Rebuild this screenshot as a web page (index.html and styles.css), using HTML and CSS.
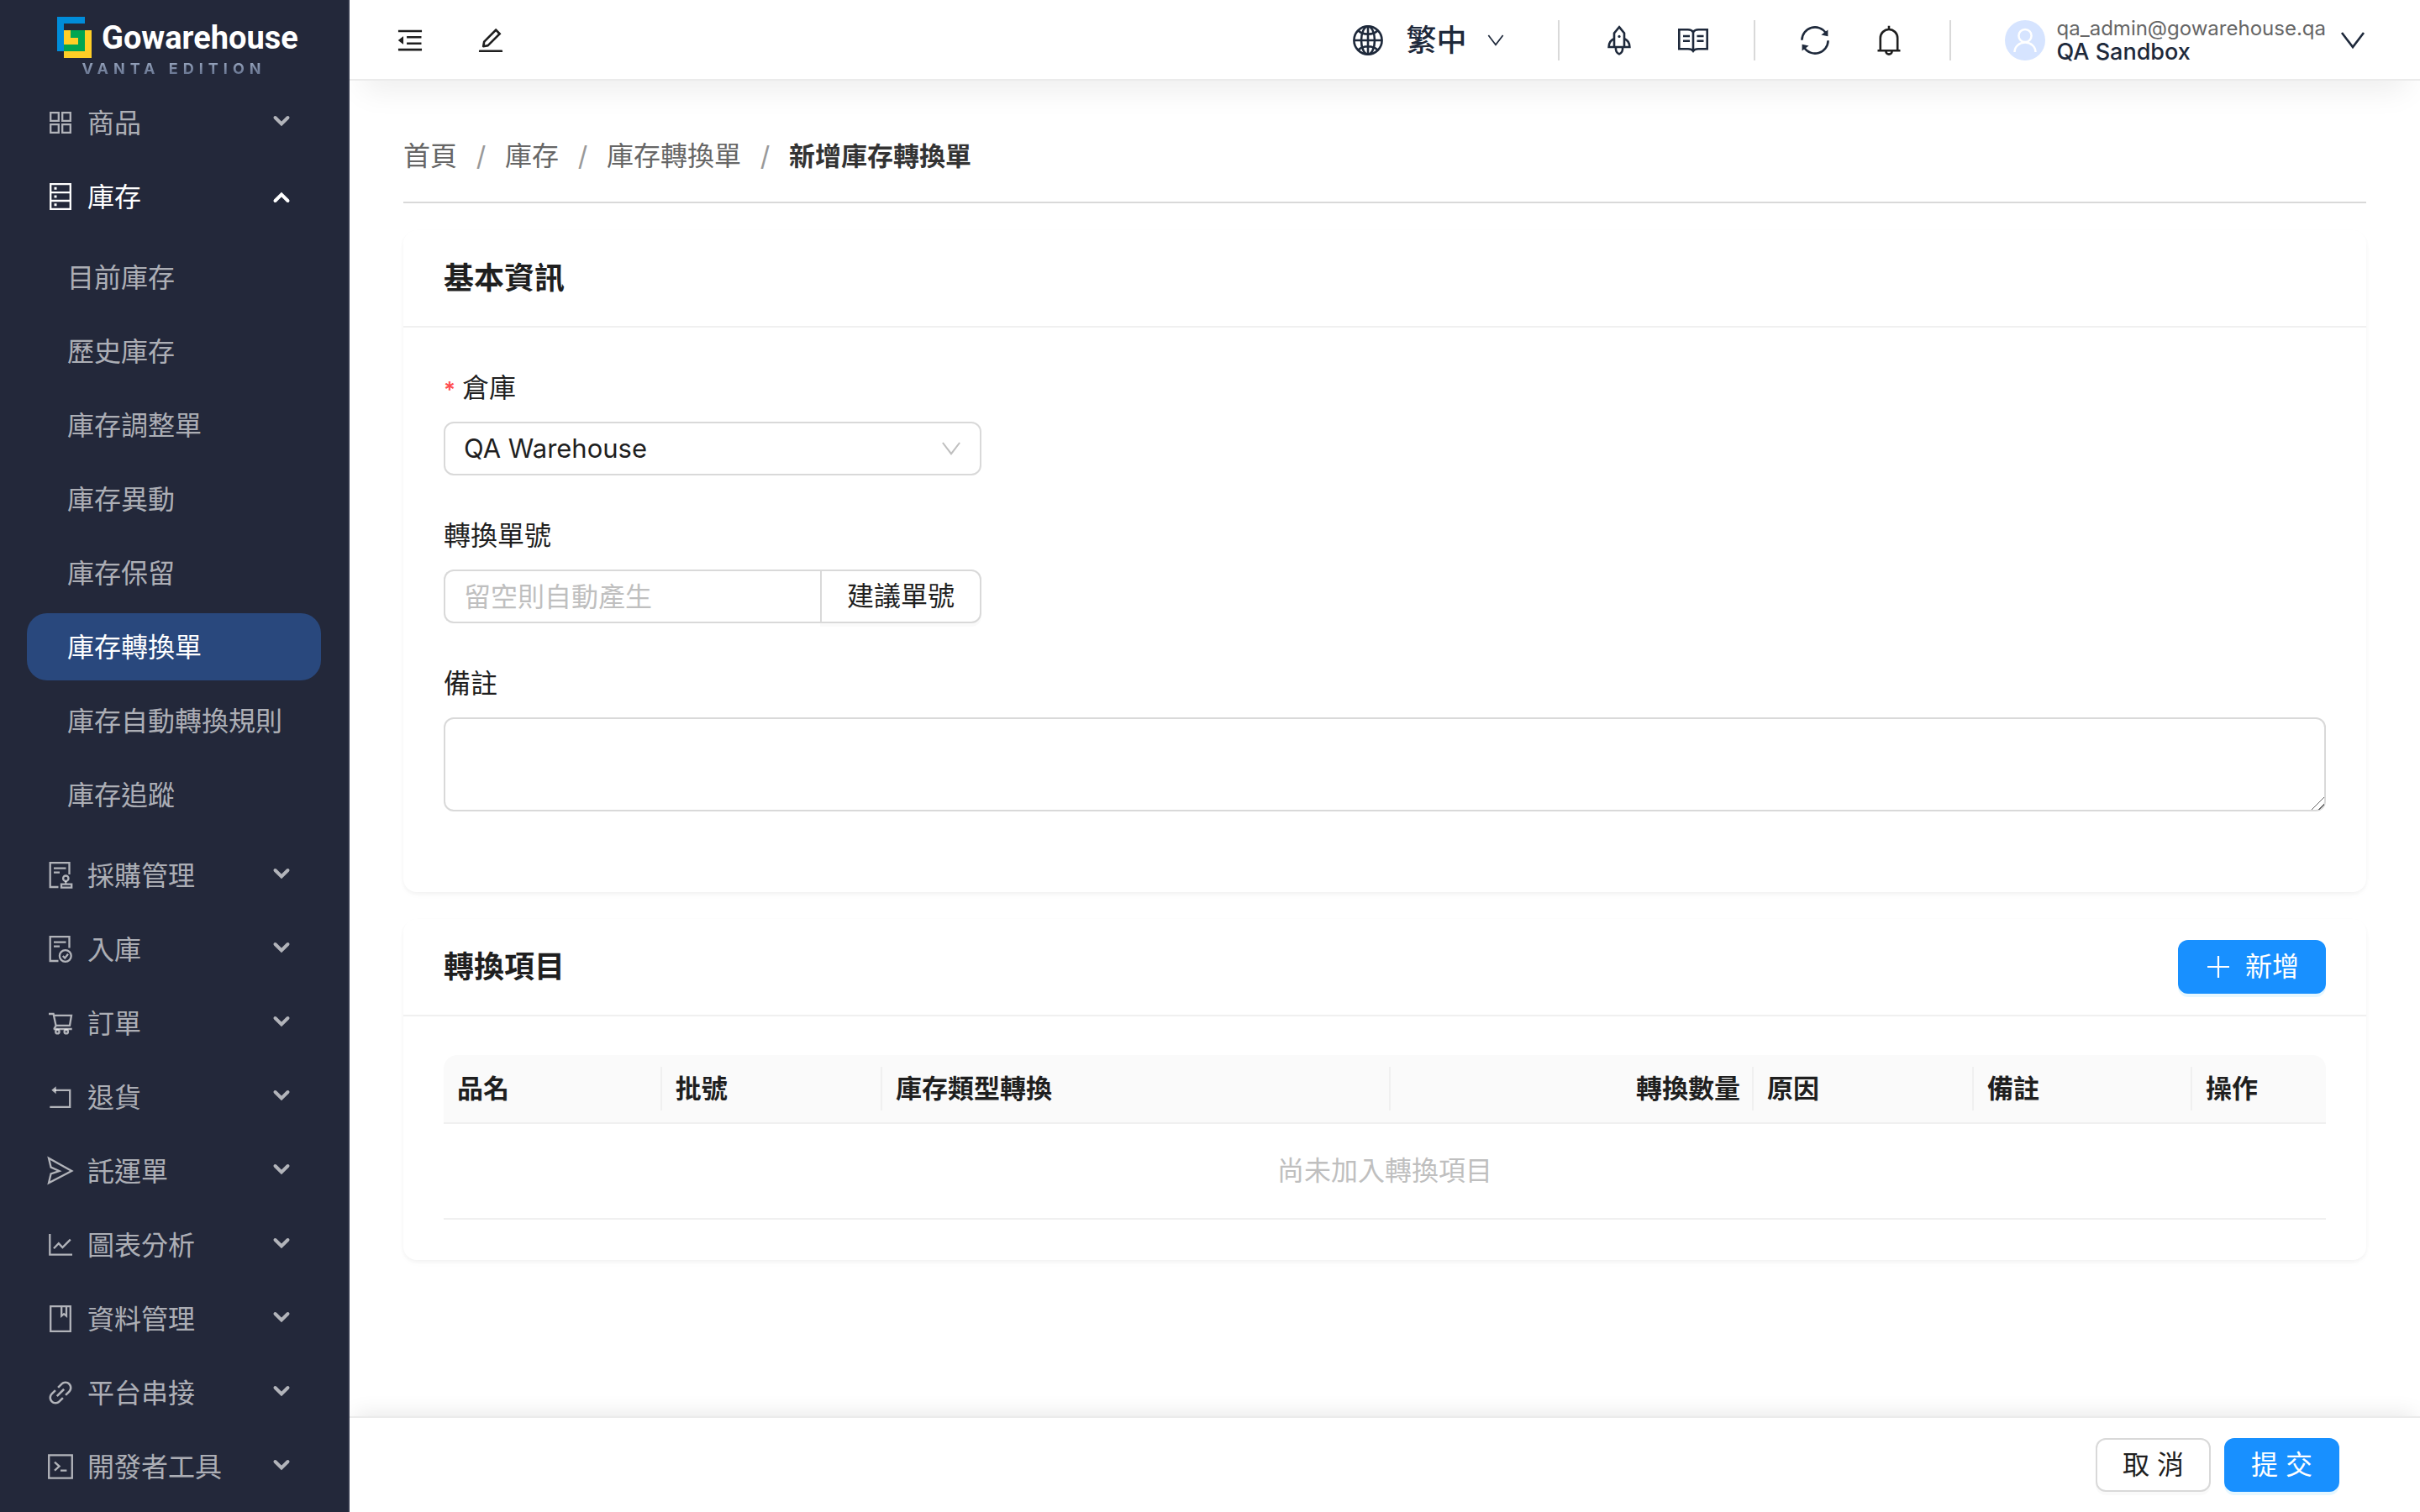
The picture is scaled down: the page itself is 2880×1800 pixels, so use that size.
FILE: index.html
```html
<!DOCTYPE html>
<html lang="zh-Hant">
<head>
  <meta charset="UTF-8">
  <meta name="viewport" content="width=device-width, initial-scale=1.0">
  <title>新增庫存轉換單</title>
  <link rel="stylesheet" href="styles.css">
</head>
<body>

  <!-- shared icons -->
  <svg class="sprite" aria-hidden="true">
    <symbol id="caret-down" viewBox="0 0 24 24">
      <path d="M4.5 6L12 13.5L19.5 6" fill="none" stroke="currentColor" stroke-width="4" stroke-linecap="round"/>
    </symbol>
    <symbol id="caret-up" viewBox="0 0 24 24">
      <path d="M4.5 17L12 9.5L19.5 17" fill="none" stroke="currentColor" stroke-width="4" stroke-linecap="round"/>
    </symbol>
    <symbol id="arrow-down" viewBox="0 0 36 36">
      <path d="M5 9L18 26L31 9" fill="none" stroke="currentColor" stroke-width="2.6"/>
    </symbol>
  </svg>

  <div class="layout">
    <aside class="sidebar">
      <div class="logo">
        <div class="logo-row">
          <svg class="logo-mark" viewBox="0 0 41 50">
            <path d="M0 0h33v8H8v33H0z" fill="#008cd9"/>
            <path d="M8 16h33v33H8z" fill="#ffcf26"/>
            <path d="M16 16h17v25H8v-8h17v-8h-9z" fill="#00a651"/>
          </svg>
          <span class="logo-name">Gowarehouse</span>
        </div>
        <div class="logo-edition">VANTA EDITION</div>
      </div>

      <nav class="menu">
        <button type="button" class="menu-title">
          <svg class="icon" viewBox="0 0 36 36"><path d="M6.2 6.2h9.6v9.6H6.2zM20.2 6.2h9.6v9.6h-9.6zM6.2 20.2h9.6v9.6H6.2zM20.2 20.2h9.6v9.6h-9.6z"/></svg>
          <span>商品</span>
          <svg class="caret"><use href="#caret-down"/></svg>
        </button>
        <button type="button" class="menu-title open">
          <svg class="icon" viewBox="0 0 36 36"><path d="M6.2 3.2h23.6v29.6H6.2zM6.2 13.2h23.6M6.2 23h23.6"/><path class="solid" d="M10.5 6.8h3v3h-3zM10.5 16.6h3v3h-3zM10.5 26.2h3v3h-3z"/></svg>
          <span>庫存</span>
          <svg class="caret"><use href="#caret-up"/></svg>
        </button>
        <div class="submenu">
          <a href="#">目前庫存</a>
          <a href="#">歷史庫存</a>
          <a href="#">庫存調整單</a>
          <a href="#">庫存異動</a>
          <a href="#">庫存保留</a>
          <a href="#" class="active">庫存轉換單</a>
          <a href="#">庫存自動轉換規則</a>
          <a href="#">庫存追蹤</a>
        </div>
        <button type="button" class="menu-title">
          <svg class="icon" viewBox="0 0 36 36"><path d="M15.5 32H5.7V3.2h22.8V17M10 9.7h14.5M10 14.7h7"/><circle cx="24.3" cy="21.7" r="3.2"/><path d="M24.3 25v3M19 28.7h12.2v4H19z"/></svg>
          <span>採購管理</span>
          <svg class="caret"><use href="#caret-down"/></svg>
        </button>
        <button type="button" class="menu-title">
          <svg class="icon" viewBox="0 0 36 36"><path d="M15.5 32H5.7V3.2h22.8V16.5M10 9.7h14.5M10 14.7h7"/><circle cx="23.8" cy="26" r="6.9"/><path d="M20.8 26l2.4 2.6 3.8-4.8"/></svg>
          <span>入庫</span>
          <svg class="caret"><use href="#caret-down"/></svg>
        </button>
        <button type="button" class="menu-title">
          <svg class="icon" viewBox="0 0 36 36"><path d="M4 7h5.6l3 14.2-2.4 4M10 8.8h21L29 20.8H12.4M9.7 25h22"/><circle cx="14.4" cy="28.2" r="2.2"/><circle cx="24.8" cy="28.2" r="2.2"/></svg>
          <span>訂單</span>
          <svg class="caret"><use href="#caret-down"/></svg>
        </button>
        <button type="button" class="menu-title">
          <svg class="icon" viewBox="0 0 36 36"><path d="M11 9.8h18.2v20H5.3"/><path class="solid" d="M7.3 9.8l5.4-4.5v9z"/></svg>
          <span>退貨</span>
          <svg class="caret"><use href="#caret-down"/></svg>
        </button>
        <button type="button" class="menu-title">
          <svg class="icon" viewBox="0 0 36 36"><path d="M4 2.8L31.3 18L4 32.2L6.6 21.4L16.5 18L6.6 13.6z"/></svg>
          <span>託運單</span>
          <svg class="caret"><use href="#caret-down"/></svg>
        </button>
        <button type="button" class="menu-title">
          <svg class="icon" viewBox="0 0 36 36"><path d="M5.3 5v24.6H32M10 22.2l5.8-6 4.6 4.8 9.4-9.4"/></svg>
          <span>圖表分析</span>
          <svg class="caret"><use href="#caret-down"/></svg>
        </button>
        <button type="button" class="menu-title">
          <svg class="icon" viewBox="0 0 36 36"><path d="M6.2 3.2h23.6v29.6H6.2zM19.2 3v11.6l2.9-2.4 2.9 2.4V3"/></svg>
          <span>資料管理</span>
          <svg class="caret"><use href="#caret-down"/></svg>
        </button>
        <button type="button" class="menu-title">
          <svg class="icon" viewBox="0 0 1024 1024"><path class="solid" d="M574 665.4a8.03 8.03 0 00-11.3 0L446.5 781.6c-53.8 53.8-144.6 59.5-204 0-59.5-59.5-53.8-150.2 0-204l116.2-116.2c3.1-3.1 3.1-8.2 0-11.3l-39.8-39.8a8.03 8.03 0 00-11.3 0L191.4 526.5c-84.6 84.6-84.6 221.5 0 306s221.5 84.6 306 0l116.2-116.2c3.1-3.1 3.1-8.2 0-11.3L574 665.4zm258.6-474c-84.6-84.6-221.5-84.6-306 0L410.3 307.6a8.03 8.03 0 000 11.3l39.7 39.7c3.1 3.1 8.2 3.1 11.3 0l116.2-116.2c53.8-53.8 144.6-59.5 204 0 59.5 59.5 53.8 150.2 0 204L665.3 562.6a8.03 8.03 0 000 11.3l39.8 39.8c3.1 3.1 8.2 3.1 11.3 0l116.2-116.2c84.5-84.6 84.5-221.5 0-306.1zM610.1 372.3a8.03 8.03 0 00-11.3 0L372.3 598.7a8.03 8.03 0 000 11.3l39.6 39.6c3.1 3.1 8.2 3.1 11.3 0l226.4-226.4c3.1-3.1 3.1-8.2 0-11.3l-39.5-39.6z"/></svg>
          <span>平台串接</span>
          <svg class="caret"><use href="#caret-down"/></svg>
        </button>
        <button type="button" class="menu-title">
          <svg class="icon" viewBox="0 0 36 36"><path d="M4.2 4.4h27.6v27.2H4.2zM11 12.6l5.6 5-5.6 5M18 22.6h7.4"/></svg>
          <span>開發者工具</span>
          <svg class="caret"><use href="#caret-down"/></svg>
        </button>
      </nav>
    </aside>

    <div class="page">
      <header class="topbar">
        <div class="topbar-left">
          <button type="button" class="icon-btn" aria-label="收合選單">
            <svg viewBox="0 0 1024 1024"><path fill="currentColor" d="M408 442h480c4.4 0 8-3.6 8-8v-56c0-4.4-3.6-8-8-8H408c-4.4 0-8 3.6-8 8v56c0 4.4 3.6 8 8 8zm-8 204c0 4.4 3.6 8 8 8h480c4.4 0 8-3.6 8-8v-56c0-4.4-3.6-8-8-8H408c-4.4 0-8 3.6-8 8v56zm504-486H120c-4.4 0-8 3.6-8 8v56c0 4.4 3.6 8 8 8h784c4.4 0 8-3.6 8-8v-56c0-4.4-3.6-8-8-8zm0 632H120c-4.4 0-8 3.6-8 8v56c0 4.4 3.6 8 8 8h784c4.4 0 8-3.6 8-8v-56c0-4.4-3.6-8-8-8zM115.4 518.9L271.7 642c5.8 4.6 14.4.5 14.4-6.9V388.9c0-7.4-8.5-11.5-14.4-6.9L115.4 505.1a8.74 8.74 0 000 13.8z"/></svg>
          </button>
          <button type="button" class="icon-btn" aria-label="編輯">
            <svg viewBox="0 0 1024 1024"><path fill="currentColor" d="M257.7 752c2 0 4-.2 6-.5L431.9 722c2-.4 3.9-1.3 5.3-2.8l423.9-423.9a9.96 9.96 0 000-14.1L694.9 114.9c-1.9-1.9-4.4-2.9-7.1-2.9s-5.2 1-7.1 2.9L256.8 538.8c-1.5 1.5-2.4 3.3-2.8 5.3l-29.5 168.2a33.5 33.5 0 009.4 29.8c6.6 6.4 14.9 9.9 23.8 9.9zm67.4-174.4L687.8 215l73.3 73.3-362.7 362.6-88.9 15.7 15.6-89zM880 836H144c-17.7 0-32 14.3-32 32v36c0 4.4 3.6 8 8 8h784c4.4 0 8-3.6 8-8v-36c0-17.7-14.3-32-32-32z"/></svg>
          </button>
        </div>

        <div class="topbar-right">
          <button type="button" class="lang">
            <svg class="line-icon" viewBox="0 0 36 36"><circle cx="18" cy="18" r="16.6"/><ellipse cx="18" cy="18" rx="8" ry="16.6"/><path d="M18 1.4v33.2M1.4 18h33.2M6.5 6.5c6 5.6 17 5.6 23 0M6.5 29.5c6-5.6 17-5.6 23 0"/></svg>
            <span>繁中</span>
            <svg class="lang-arrow"><use href="#arrow-down"/></svg>
          </button>
          <div class="tools">
            <button type="button" class="icon-btn navy" aria-label="快速開始">
              <svg class="line-icon" viewBox="0 0 36 36"><path d="M18 2.2L24 9.5V26H12V9.5zM12 16c-4.5 2-6.4 5-6.4 10H12M24 16c4.5 2 6.4 5 6.4 10H24M14 26c-.5 4 1 7 4 8.4 3-1.4 4.5-4.4 4-8.4"/><circle class="solid" cx="18" cy="13.4" r="1.6"/></svg>
            </button>
            <button type="button" class="icon-btn navy" aria-label="說明文件">
              <svg class="line-icon" viewBox="0 0 36 36"><path d="M1.3 5.3h10.5c3 0 5 1 6.2 3 1.2-2 3.2-3 6.2-3h10.5v23H24c-3 0-4.8.6-6 2.4-1.2-1.8-3-2.4-6-2.4H1.3zM18 8v22M6 13h8M6 18.7h8M22.5 13h8M22.5 18.7h8"/></svg>
            </button>
          </div>
          <div class="tools">
            <button type="button" class="icon-btn navy" aria-label="重新整理">
              <svg class="line-icon" viewBox="0 0 36 36"><path d="M2.4 17.8A15.6 15.6 0 0 1 31 9.4M33.6 18.2A15.6 15.6 0 0 1 5 26.6"/><path class="solid" d="M33.4 5.6v7.6l-8-1.6zM2.6 30.4v-7.6l8 1.6z"/></svg>
            </button>
            <button type="button" class="icon-btn" aria-label="通知">
              <svg class="line-icon" viewBox="0 0 36 36"><path d="M18 .8v4M7.8 30V15.2a10.2 10.2 0 0 1 20.4 0V30M4.5 30.2h27M14.4 31a3.6 3.6 0 0 0 7.2 0"/></svg>
            </button>
          </div>
          <button type="button" class="user">
            <svg class="avatar" viewBox="0 0 48 48"><circle cx="24" cy="24" r="24" fill="#d6e4ff"/><g fill="none" stroke="#fff" stroke-width="2.5"><circle cx="24" cy="18.5" r="7.6"/><path d="M11.5 38a12.5 11.5 0 0 1 25 0"/></g></svg>
            <span class="user-text">
              <span class="user-mail">qa_admin@gowarehouse.qa</span>
              <span class="user-org">QA Sandbox</span>
            </span>
            <svg class="user-arrow"><use href="#arrow-down"/></svg>
          </button>
        </div>
      </header>

      <main class="content">
        <nav class="breadcrumb" aria-label="breadcrumb">
          <a href="#">首頁</a>
          <span class="sep">/</span>
          <a href="#">庫存</a>
          <span class="sep">/</span>
          <a href="#">庫存轉換單</a>
          <span class="sep">/</span>
          <span class="current">新增庫存轉換單</span>
        </nav>

        <section class="card">
          <div class="card-head">
            <h2>基本資訊</h2>
          </div>
          <form class="card-body">
            <div class="field">
              <label for="warehouse"><span class="required">*</span>倉庫</label>
              <div class="select-wrap">
                <select id="warehouse">
                  <option>QA Warehouse</option>
                </select>
                <svg class="select-arrow"><use href="#arrow-down"/></svg>
              </div>
            </div>
            <div class="field">
              <label for="orderNo">轉換單號</label>
              <div class="input-group">
                <input type="text" id="orderNo" placeholder="留空則自動產生">
                <button type="button" class="btn">建議單號</button>
              </div>
            </div>
            <div class="field">
              <label for="remark">備註</label>
              <textarea id="remark"></textarea>
            </div>
          </form>
        </section>

        <section class="card">
          <div class="card-head">
            <h2>轉換項目</h2>
            <button type="button" class="btn btn-primary">
              <svg class="plus" viewBox="0 0 32 32"><path d="M16 3v26M3 16h26" stroke="currentColor" stroke-width="2.2"/></svg>
              新增
            </button>
          </div>
          <div class="card-body card-body-table">
            <table>
              <colgroup>
                <col class="col-name">
                <col class="col-lot">
                <col class="col-type">
                <col class="col-qty">
                <col class="col-reason">
                <col class="col-note">
                <col class="col-action">
              </colgroup>
              <thead>
                <tr>
                  <th>品名</th>
                  <th>批號</th>
                  <th>庫存類型轉換</th>
                  <th class="num">轉換數量</th>
                  <th>原因</th>
                  <th>備註</th>
                  <th>操作</th>
                </tr>
              </thead>
              <tbody>
                <tr>
                  <td class="empty" colspan="7">尚未加入轉換項目</td>
                </tr>
              </tbody>
            </table>
          </div>
        </section>
      </main>

      <footer class="actions">
        <button type="button" class="btn">取 消</button>
        <button type="submit" class="btn btn-primary">提 交</button>
      </footer>
    </div>
  </div>

</body>
</html>
```
FILE: styles.css
```css
* {
  box-sizing: border-box;
}

body {
  margin: 0;
  background: #fff;
  color: #1f1f1f;
  font-family: Inter, "Noto Sans CJK TC", sans-serif;
  font-size: 32px;
  line-height: 48px;
}

button,
input,
select,
textarea {
  font: inherit;
  color: inherit;
}

button {
  border: none;
  background: none;
  padding: 0;
  cursor: pointer;
}

a {
  color: inherit;
  text-decoration: none;
}

.sprite {
  display: none;
}

.layout {
  display: grid;
  grid-template-columns: 416px 1fr;
  height: 100vh;
}

/* sidebar */
.sidebar {
  position: relative;
  z-index: 3;
  background: #23283a;
  border-right: 2px solid #32374a;
  padding: 20px 32px 0;
  overflow: hidden;
  color: rgba(255, 255, 255, 0.65);
}

.logo {
  height: 86px;
}

.logo-row {
  display: flex;
  align-items: center;
  height: 50px;
  padding-left: 36px;
  gap: 12px;
}

.logo-mark {
  width: 41px;
  height: 50px;
  flex: none;
}

.logo-name {
  color: #fff;
  font-family: Roboto, "Liberation Sans", sans-serif;
  font-size: 38px;
  font-weight: bold;
  white-space: nowrap;
}

.logo-edition {
  text-align: center;
  font-size: 18px;
  font-weight: 700;
  line-height: 24px;
  letter-spacing: 6px;
  background: linear-gradient(#a3b1c9, #566380);
  -webkit-background-clip: text;
  background-clip: text;
  color: transparent;
}

.menu,
.submenu {
  display: flex;
  flex-direction: column;
  gap: 8px;
}

.menu-title {
  display: flex;
  align-items: center;
  gap: 14px;
  height: 80px;
  padding: 0 35px 0 22px;
  text-align: left;
}

.menu-title.open {
  color: #fff;
}

.menu-title span {
  flex: 1;
  padding-top: 2px;
}

.icon {
  width: 36px;
  height: 36px;
  fill: none;
  stroke: currentColor;
  stroke-width: 2.3;
}

.caret {
  width: 24px;
  height: 24px;
}

.submenu {
  padding: 8px 0;
}

.submenu a {
  height: 80px;
  padding-left: 48px;
  border-radius: 24px;
  line-height: 82px;
}

.submenu .active {
  background: #29487d;
  color: #fff;
}

.solid {
  fill: currentColor;
  stroke: none;
}

/* top bar */
.page {
  display: flex;
  flex-direction: column;
  min-width: 0;
  height: 100vh;
}

.topbar {
  position: relative;
  z-index: 2;
  flex: none;
  display: flex;
  align-items: center;
  justify-content: space-between;
  height: 96px;
  padding: 2px 62px 0 54px;
  background: #fff;
  border-bottom: 2px solid #ebebeb;
  box-shadow: 0 28px 36px -16px rgba(0, 0, 0, 0.07);
}

.topbar-left {
  display: flex;
  gap: 60px;
}

.topbar-right {
  display: flex;
  align-items: center;
  color: #1e293b;
}

.icon-btn {
  width: 36px;
  height: 36px;
  color: #1f1f1f;
}

.icon-btn svg {
  display: block;
  width: 36px;
  height: 36px;
}

.navy {
  color: #1e293b;
}

.line-icon {
  width: 36px;
  height: 36px;
  fill: none;
  stroke: currentColor;
  stroke-width: 2.6;
}

.lang {
  display: flex;
  align-items: center;
  margin-right: 62px;
  font-size: 36px;
  font-weight: 500;
}

.lang span {
  margin: 0 22px 0 28px;
}

.lang-arrow {
  width: 24px;
  height: 24px;
}

.tools {
  display: flex;
  align-items: center;
  gap: 52px;
  height: 48px;
  padding: 0 54px 0 53px;
  border-left: 2px solid #d9d9d9;
}

.user {
  display: flex;
  align-items: center;
  padding-left: 64px;
  gap: 14px;
  height: 48px;
  border-left: 2px solid #d9d9d9;
  text-align: left;
}

.avatar {
  width: 48px;
  height: 48px;
}

.user-text {
  display: flex;
  flex-direction: column;
  line-height: 28px;
}

.user-mail {
  color: #666;
  font-size: 24px;
}

.user-org {
  font-size: 27px;
  font-weight: 500;
}

.user-arrow {
  width: 36px;
  height: 36px;
}

/* content */
.content {
  flex: 1;
  min-height: 0;
  overflow: auto;
  padding: 66px 64px 0;
}

.breadcrumb {
  display: flex;
  height: 80px;
  border-bottom: 2px solid #d9d9d9;
  color: #666;
}

.breadcrumb .sep {
  width: 57px;
  text-align: center;
  color: #999;
}

.breadcrumb .current {
  color: #333;
  font-size: 31px;
  font-weight: 600;
}

.card {
  margin-top: 32px;
  border-radius: 16px;
  background: #fff;
  box-shadow: 0 2px 4px rgba(0, 0, 0, 0.03), 0 2px 12px -2px rgba(0, 0, 0, 0.02), 0 4px 8px rgba(0, 0, 0, 0.02);
}

.card-head {
  display: flex;
  align-items: center;
  justify-content: space-between;
  height: 116px;
  padding: 0 48px;
  border-bottom: 2px solid #f0f0f0;
}

.card-head h2 {
  margin: 0;
  font-size: 36px;
  font-weight: 600;
}

.card-body {
  padding: 48px;
}

.card-body-table {
  padding-top: 46px;
}

.field {
  margin-bottom: 48px;
}

.field label {
  display: block;
  height: 48px;
  margin-bottom: 16px;
}

.required {
  margin-right: 8px;
  color: #ff4d4f;
  font-size: 26px;
  font-weight: 600;
  line-height: 1;
}

.select-wrap,
.input-group {
  position: relative;
  display: flex;
  width: 640px;
  max-width: 100%;
}

.field select,
.field input,
.field textarea {
  display: block;
  width: 100%;
  height: 64px;
  padding: 0 22px;
  border: 2px solid #d9d9d9;
  border-radius: 12px;
  background: #fff;
  outline: none;
}

.field select {
  appearance: none;
  font-size: 31px;
}

.select-arrow {
  position: absolute;
  top: 18px;
  right: 22px;
  width: 28px;
  height: 28px;
  color: #bfbfbf;
  pointer-events: none;
}

.field input {
  flex: 1;
  min-width: 0;
  border-right: none;
  border-radius: 12px 0 0 12px;
}

.field input::placeholder {
  color: #bfbfbf;
}

.field textarea {
  height: 112px;
  padding: 8px 22px;
  resize: vertical;
}

.field textarea::-webkit-resizer {
  background: linear-gradient(135deg, transparent 47%, #666 47%, #666 53%, transparent 53%, transparent 76%, #666 76%, #666 82%, transparent 82%);
}

.btn {
  display: flex;
  align-items: center;
  gap: 16px;
  height: 64px;
  padding: 0 30px;
  border: 2px solid #d9d9d9;
  border-radius: 12px;
  background: #fff;
  box-shadow: 0 4px 0 rgba(0, 0, 0, 0.02);
  white-space: nowrap;
}

.btn-primary {
  border-color: #1890ff;
  background: #1890ff;
  box-shadow: 0 4px 0 #e6f7ff;
  color: #fff;
}

.input-group .btn {
  border-radius: 0 12px 12px 0;
}

.plus {
  width: 32px;
  height: 32px;
}

/* table */
table {
  width: 100%;
  table-layout: fixed;
  border-collapse: separate;
  border-spacing: 0;
}

.col-name,
.col-note {
  width: 11.6%;
}

.col-lot,
.col-reason {
  width: 11.7%;
}

.col-type {
  width: 27%;
}

.col-qty {
  width: 19.3%;
}

.col-action {
  width: 7.1%;
}

th {
  position: relative;
  height: 82px;
  padding: 0 16px;
  border-bottom: 2px solid #f0f0f0;
  background: #fafafa;
  font-size: 31px;
  font-weight: 600;
  text-align: left;
}

th.num {
  text-align: right;
}

th:first-child {
  border-top-left-radius: 16px;
}

th:last-child {
  border-top-right-radius: 16px;
}

th:not(:last-child)::after {
  content: "";
  position: absolute;
  top: 14px;
  right: 0;
  width: 2px;
  height: 52px;
  background: #f0f0f0;
}

.empty {
  height: 114px;
  padding: 0 16px;
  border-bottom: 2px solid #f0f0f0;
  color: #bfbfbf;
  text-align: center;
}

/* footer */
.actions {
  position: relative;
  z-index: 1;
  flex: none;
  display: flex;
  align-items: center;
  justify-content: flex-end;
  gap: 16px;
  height: 114px;
  padding: 0 96px;
  border-top: 2px solid #ebebeb;
  background: #fff;
  box-shadow: 0 -8px 24px -6px rgba(0, 0, 0, 0.1);
}
```
